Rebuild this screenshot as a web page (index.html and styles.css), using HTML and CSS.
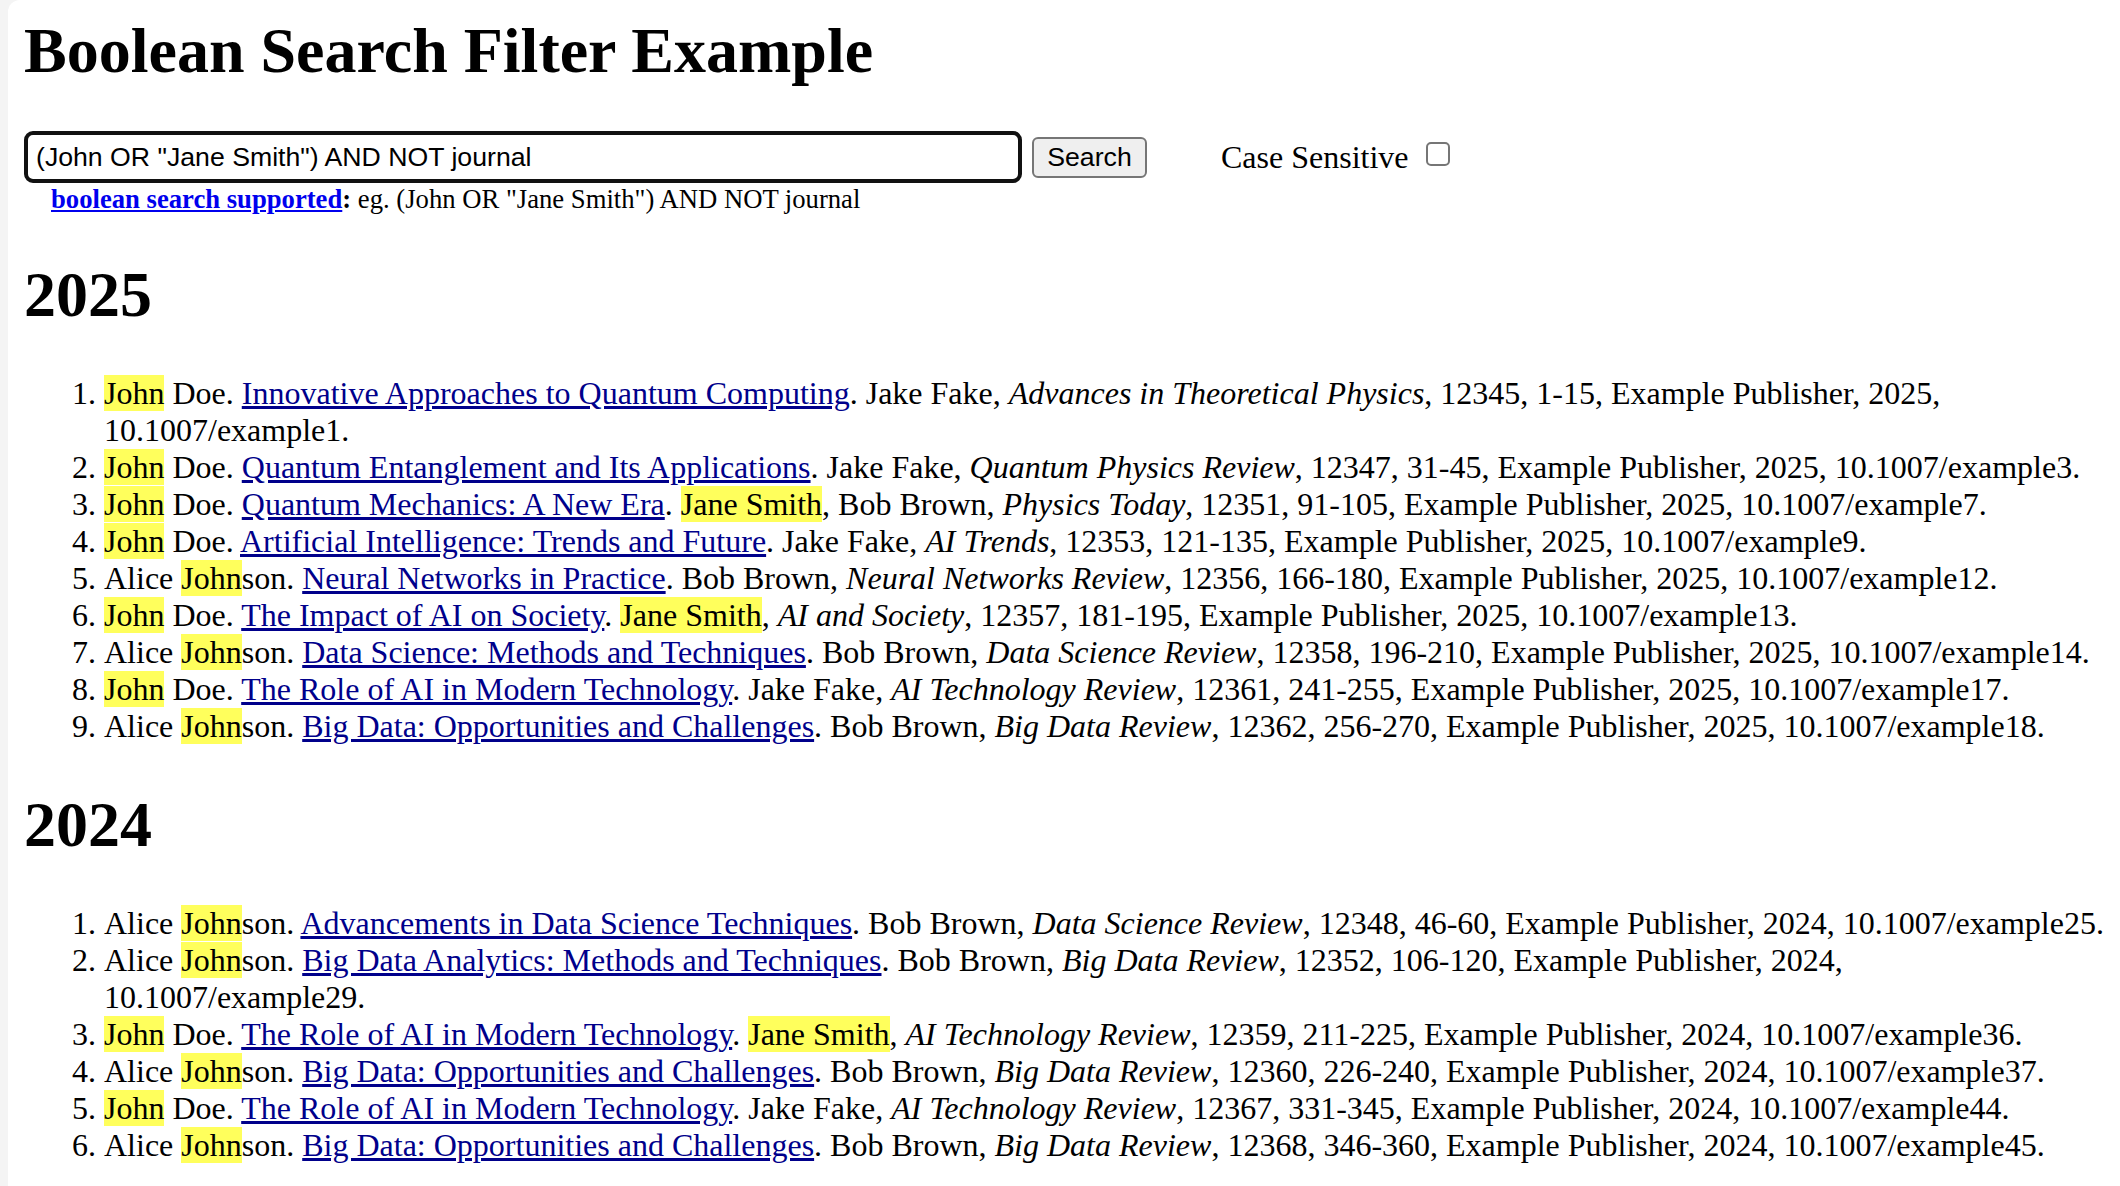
FILE: index.html
```html
<!DOCTYPE html>
<html lang="en">
<head>
<meta charset="utf-8">
<title>Boolean Search Filter Example</title>
<link rel="stylesheet" href="styles.css">
</head>
<body>
<div class="page">
  <h1 class="title">Boolean Search Filter Example</h1>
  <div class="search-row">
    <input class="search-input" type="text" value="(John OR &quot;Jane Smith&quot;) AND NOT journal">
    <button class="search-btn" type="button">Search</button>
    <label class="case-label">Case Sensitive</label>
    <span class="checkbox"></span>
  </div>
  <div class="hint"><a class="hint-link" href="#">boolean search supported</a><b>:</b> eg. (John OR "Jane Smith") AND NOT journal</div>

  <h2 class="year">2025</h2>
  <ol class="pubs">
    <li><mark>John</mark> Doe. <a href="#">Innovative Approaches to Quantum Computing</a>. Jake Fake, <i>Advances in Theoretical Physics</i>, 12345, 1-15, Example Publisher, 2025, 10.1007/example1.</li>
    <li><mark>John</mark> Doe. <a href="#">Quantum Entanglement and Its Applications</a>. Jake Fake, <i>Quantum Physics Review</i>, 12347, 31-45, Example Publisher, 2025, 10.1007/example3.</li>
    <li><mark>John</mark> Doe. <a href="#">Quantum Mechanics: A New Era</a>. <mark>Jane Smith</mark>, Bob Brown, <i>Physics Today</i>, 12351, 91-105, Example Publisher, 2025, 10.1007/example7.</li>
    <li><mark>John</mark> Doe. <a href="#">Artificial Intelligence: Trends and Future</a>. Jake Fake, <i>AI Trends</i>, 12353, 121-135, Example Publisher, 2025, 10.1007/example9.</li>
    <li>Alice <mark>John</mark>son. <a href="#">Neural Networks in Practice</a>. Bob Brown, <i>Neural Networks Review</i>, 12356, 166-180, Example Publisher, 2025, 10.1007/example12.</li>
    <li><mark>John</mark> Doe. <a href="#">The Impact of AI on Society</a>. <mark>Jane Smith</mark>, <i>AI and Society</i>, 12357, 181-195, Example Publisher, 2025, 10.1007/example13.</li>
    <li>Alice <mark>John</mark>son. <a href="#">Data Science: Methods and Techniques</a>. Bob Brown, <i>Data Science Review</i>, 12358, 196-210, Example Publisher, 2025, 10.1007/example14.</li>
    <li><mark>John</mark> Doe. <a href="#">The Role of AI in Modern Technology</a>. Jake Fake, <i>AI Technology Review</i>, 12361, 241-255, Example Publisher, 2025, 10.1007/example17.</li>
    <li>Alice <mark>John</mark>son. <a href="#">Big Data: Opportunities and Challenges</a>. Bob Brown, <i>Big Data Review</i>, 12362, 256-270, Example Publisher, 2025, 10.1007/example18.</li>
  </ol>

  <h2 class="year">2024</h2>
  <ol class="pubs">
    <li>Alice <mark>John</mark>son. <a href="#">Advancements in Data Science Techniques</a>. Bob Brown, <i>Data Science Review</i>, 12348, 46-60, Example Publisher, 2024, 10.1007/example25.</li>
    <li>Alice <mark>John</mark>son. <a href="#">Big Data Analytics: Methods and Techniques</a>. Bob Brown, <i>Big Data Review</i>, 12352, 106-120, Example Publisher, 2024, 10.1007/example29.</li>
    <li><mark>John</mark> Doe. <a href="#">The Role of AI in Modern Technology</a>. <mark>Jane Smith</mark>, <i>AI Technology Review</i>, 12359, 211-225, Example Publisher, 2024, 10.1007/example36.</li>
    <li>Alice <mark>John</mark>son. <a href="#">Big Data: Opportunities and Challenges</a>. Bob Brown, <i>Big Data Review</i>, 12360, 226-240, Example Publisher, 2024, 10.1007/example37.</li>
    <li><mark>John</mark> Doe. <a href="#">The Role of AI in Modern Technology</a>. Jake Fake, <i>AI Technology Review</i>, 12367, 331-345, Example Publisher, 2024, 10.1007/example44.</li>
    <li>Alice <mark>John</mark>son. <a href="#">Big Data: Opportunities and Challenges</a>. Bob Brown, <i>Big Data Review</i>, 12368, 346-360, Example Publisher, 2024, 10.1007/example45.</li>
  </ol>
</div>
</body>
</html>
```
FILE: styles.css
```css
html, body {
  margin: 0;
  padding: 0;
  background: #f4f4f4;
}

body {
  font-family: "Liberation Serif", "Times New Roman", serif;
  font-size: 32px;
  color: #000;
}

.page {
  margin-left: 8px;
  background: #fff;
  border-top-left-radius: 12px;
  padding: 14px 16px 16px 16px;
  min-height: 1186px;
  box-sizing: border-box;
}

.title {
  font-size: 64px;
  font-weight: bold;
  margin: 0 0 43px 0;
  line-height: normal;
}

.search-row {
  display: flex;
  align-items: center;
  height: 52px;
}

.search-input {
  box-sizing: border-box;
  width: 998px;
  height: 52px;
  border: 4px solid #111;
  border-radius: 9px;
  padding: 0 8px;
  font-family: "Liberation Sans", Arial, sans-serif;
  font-size: 26.67px;
  color: #000;
  outline: none;
  margin: 0;
}

.search-btn {
  box-sizing: border-box;
  margin-left: 10px;
  width: 115px;
  height: 41px;
  background: #efefef;
  border: 2px solid #767676;
  border-radius: 6px;
  font-family: "Liberation Sans", Arial, sans-serif;
  font-size: 26.67px;
  color: #000;
  padding: 0;
}

.case-label {
  margin-left: 74px;
  font-size: 32px;
  line-height: normal;
}

.checkbox {
  box-sizing: border-box;
  display: inline-block;
  width: 24px;
  height: 24px;
  margin-left: 17px;
  margin-bottom: 6px;
  border: 2px solid #767676;
  border-radius: 5px;
  background: #fff;
}

.hint {
  font-size: 26.67px;
  padding-left: 27px;
  padding-top: 1px;
  line-height: normal;
}

.hint-link {
  color: #0000ee;
  font-weight: bold;
  text-decoration: underline;
}

.year {
  font-size: 64px;
  font-weight: bold;
  margin: 43px 0 43px 0;
  line-height: normal;
}

.pubs {
  margin: 0;
  padding-left: 80px;
  line-height: normal;
}

.pubs a {
  color: #00008b;
  text-decoration: underline;
}

.pubs mark {
  background: #ffff5c;
  color: #000;
}
```
